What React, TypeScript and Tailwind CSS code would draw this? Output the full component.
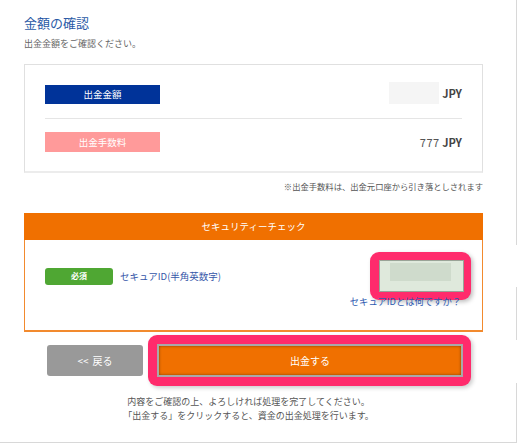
import React from "react";

export default function App() {
  return (
    <div
      className="w-[519px] h-[448px] bg-white overflow-hidden"
      style={{ fontFamily: '"Noto Sans CJK JP", "Noto Sans", sans-serif' }}
    >
      <div className="flex w-[517px] h-[443px] border-b border-[#d8d8d8]">
        <div className="w-[516px] pl-[24px] pr-[33px]">
          <div className="pt-[14px] text-[13px] leading-[18px] text-[#2b5aa6]">金額の確認</div>
          <div className="mt-[6px] text-[9px] leading-[12px] text-[#666]">出金金額をご確認ください。</div>

          <div className="mt-[14px] h-[109px] border border-[#e0e0e0] border-b-2 border-b-[#ececec] px-[20px] pt-[17px]">
            <div className="flex items-center justify-between h-[22px]">
              <div className="mt-[3px] w-[115px] h-[19px] bg-[#003399] text-white text-[9.5px] flex items-center justify-center">
                出金金額
              </div>
              <div className="flex items-center">
                <div className="w-[50px] h-[22px] bg-[#f5f5f5]"></div>
                <span className="ml-[3px] text-[11px] font-bold text-[#444]">JPY</span>
              </div>
            </div>
            <div className="mt-[14px] h-px bg-[#e5e5e5]"></div>
            <div className="mt-[13px] flex items-center justify-between h-[20px]">
              <div className="w-[115px] h-[20px] bg-[#ff9a9a] text-white text-[9.5px] flex items-center justify-center">
                出金手数料
              </div>
              <div className="text-[11px] text-[#555]">
                <span className="font-normal tracking-[0.5px]">777</span>{" "}
                <span className="font-bold text-[#444]">JPY</span>
              </div>
            </div>
          </div>

          <div className="mt-[7px] text-right text-[8.3px] leading-[12px] text-[#555]">
            ※出金手数料は、出金元口座から引き落としされます
          </div>

          <div className="mt-[21px]">
            <div className="h-[27px] bg-[#f07000] text-white text-[9.5px] flex items-center justify-center">
              セキュリティーチェック
            </div>
            <div className="h-[92px] border-x border-b-2 border-[#f28a2e] pl-[20px] pr-[11px] pt-[12px]">
              <div className="flex items-center justify-between h-[48px]">
                <div className="flex items-center">
                  <div className="w-[68px] h-[17px] rounded-[3px] bg-[#4fa733] text-white text-[8px] font-bold flex items-center justify-center">
                    必須
                  </div>
                  <span className="ml-[7px] text-[9.5px] text-[#3556a8]">セキュアID(半角英数字)</span>
                </div>
                <div className="w-[101px] h-[48px] rounded-[9px] bg-[#ff2b6c] pl-[9px] pr-[7px] pt-[8px] pb-[8px] shadow-[2px_2px_4px_rgba(0,0,0,0.25)]">
                  <div className="w-full h-full border border-[#9aa397] bg-[#dfe9dc] pl-[10px] pt-[2px]">
                    <div className="w-[61px] h-[18px] bg-[#cfdbcc]"></div>
                  </div>
                </div>
              </div>
              <div className="-mt-[5px] mr-[10px] text-right text-[9.3px] leading-[12px] text-[#2d59b0]">
                セキュアIDとは何ですか？
              </div>
            </div>
          </div>

          <div className="mt-[3px] flex items-center">
            <div className="ml-[23px] w-[96px] h-[31px] rounded-[3px] bg-[#999999] text-white text-[10px] flex items-center justify-center gap-[4px]">
              <span>&lt;&lt;</span>
              <span>戻る</span>
            </div>
            <div className="ml-[5px] w-[323px] h-[51px] rounded-[9px] bg-[#ff2b6c] pl-[9px] pr-[8px] py-[9px] shadow-[2px_2px_4px_rgba(0,0,0,0.2)]">
              <div className="w-full h-full border-2 border-[#a9a9a9] bg-[#f07000] shadow-[inset_0_0_3px_rgba(0,0,0,0.45)] text-white text-[10px] flex items-center justify-center">
                出金する
              </div>
            </div>
          </div>

          <div className="mt-[9px] mr-[10px] text-center text-[9px] leading-[14px] text-[#555]">
            <div>内容をご確認の上、よろしければ処理を完了してください。</div>
            <div>「出金する」をクリックすると、資金の出金処理を行います。</div>
          </div>
        </div>
        <div className="w-px flex flex-col">
          <div className="h-[245px] bg-[#d8d8d8]"></div>
          <div className="h-[42px]"></div>
          <div className="h-[53px] bg-[#d8d8d8]"></div>
          <div className="h-[43px]"></div>
          <div className="flex-1 bg-[#d8d8d8]"></div>
        </div>
      </div>
    </div>
  );
}
